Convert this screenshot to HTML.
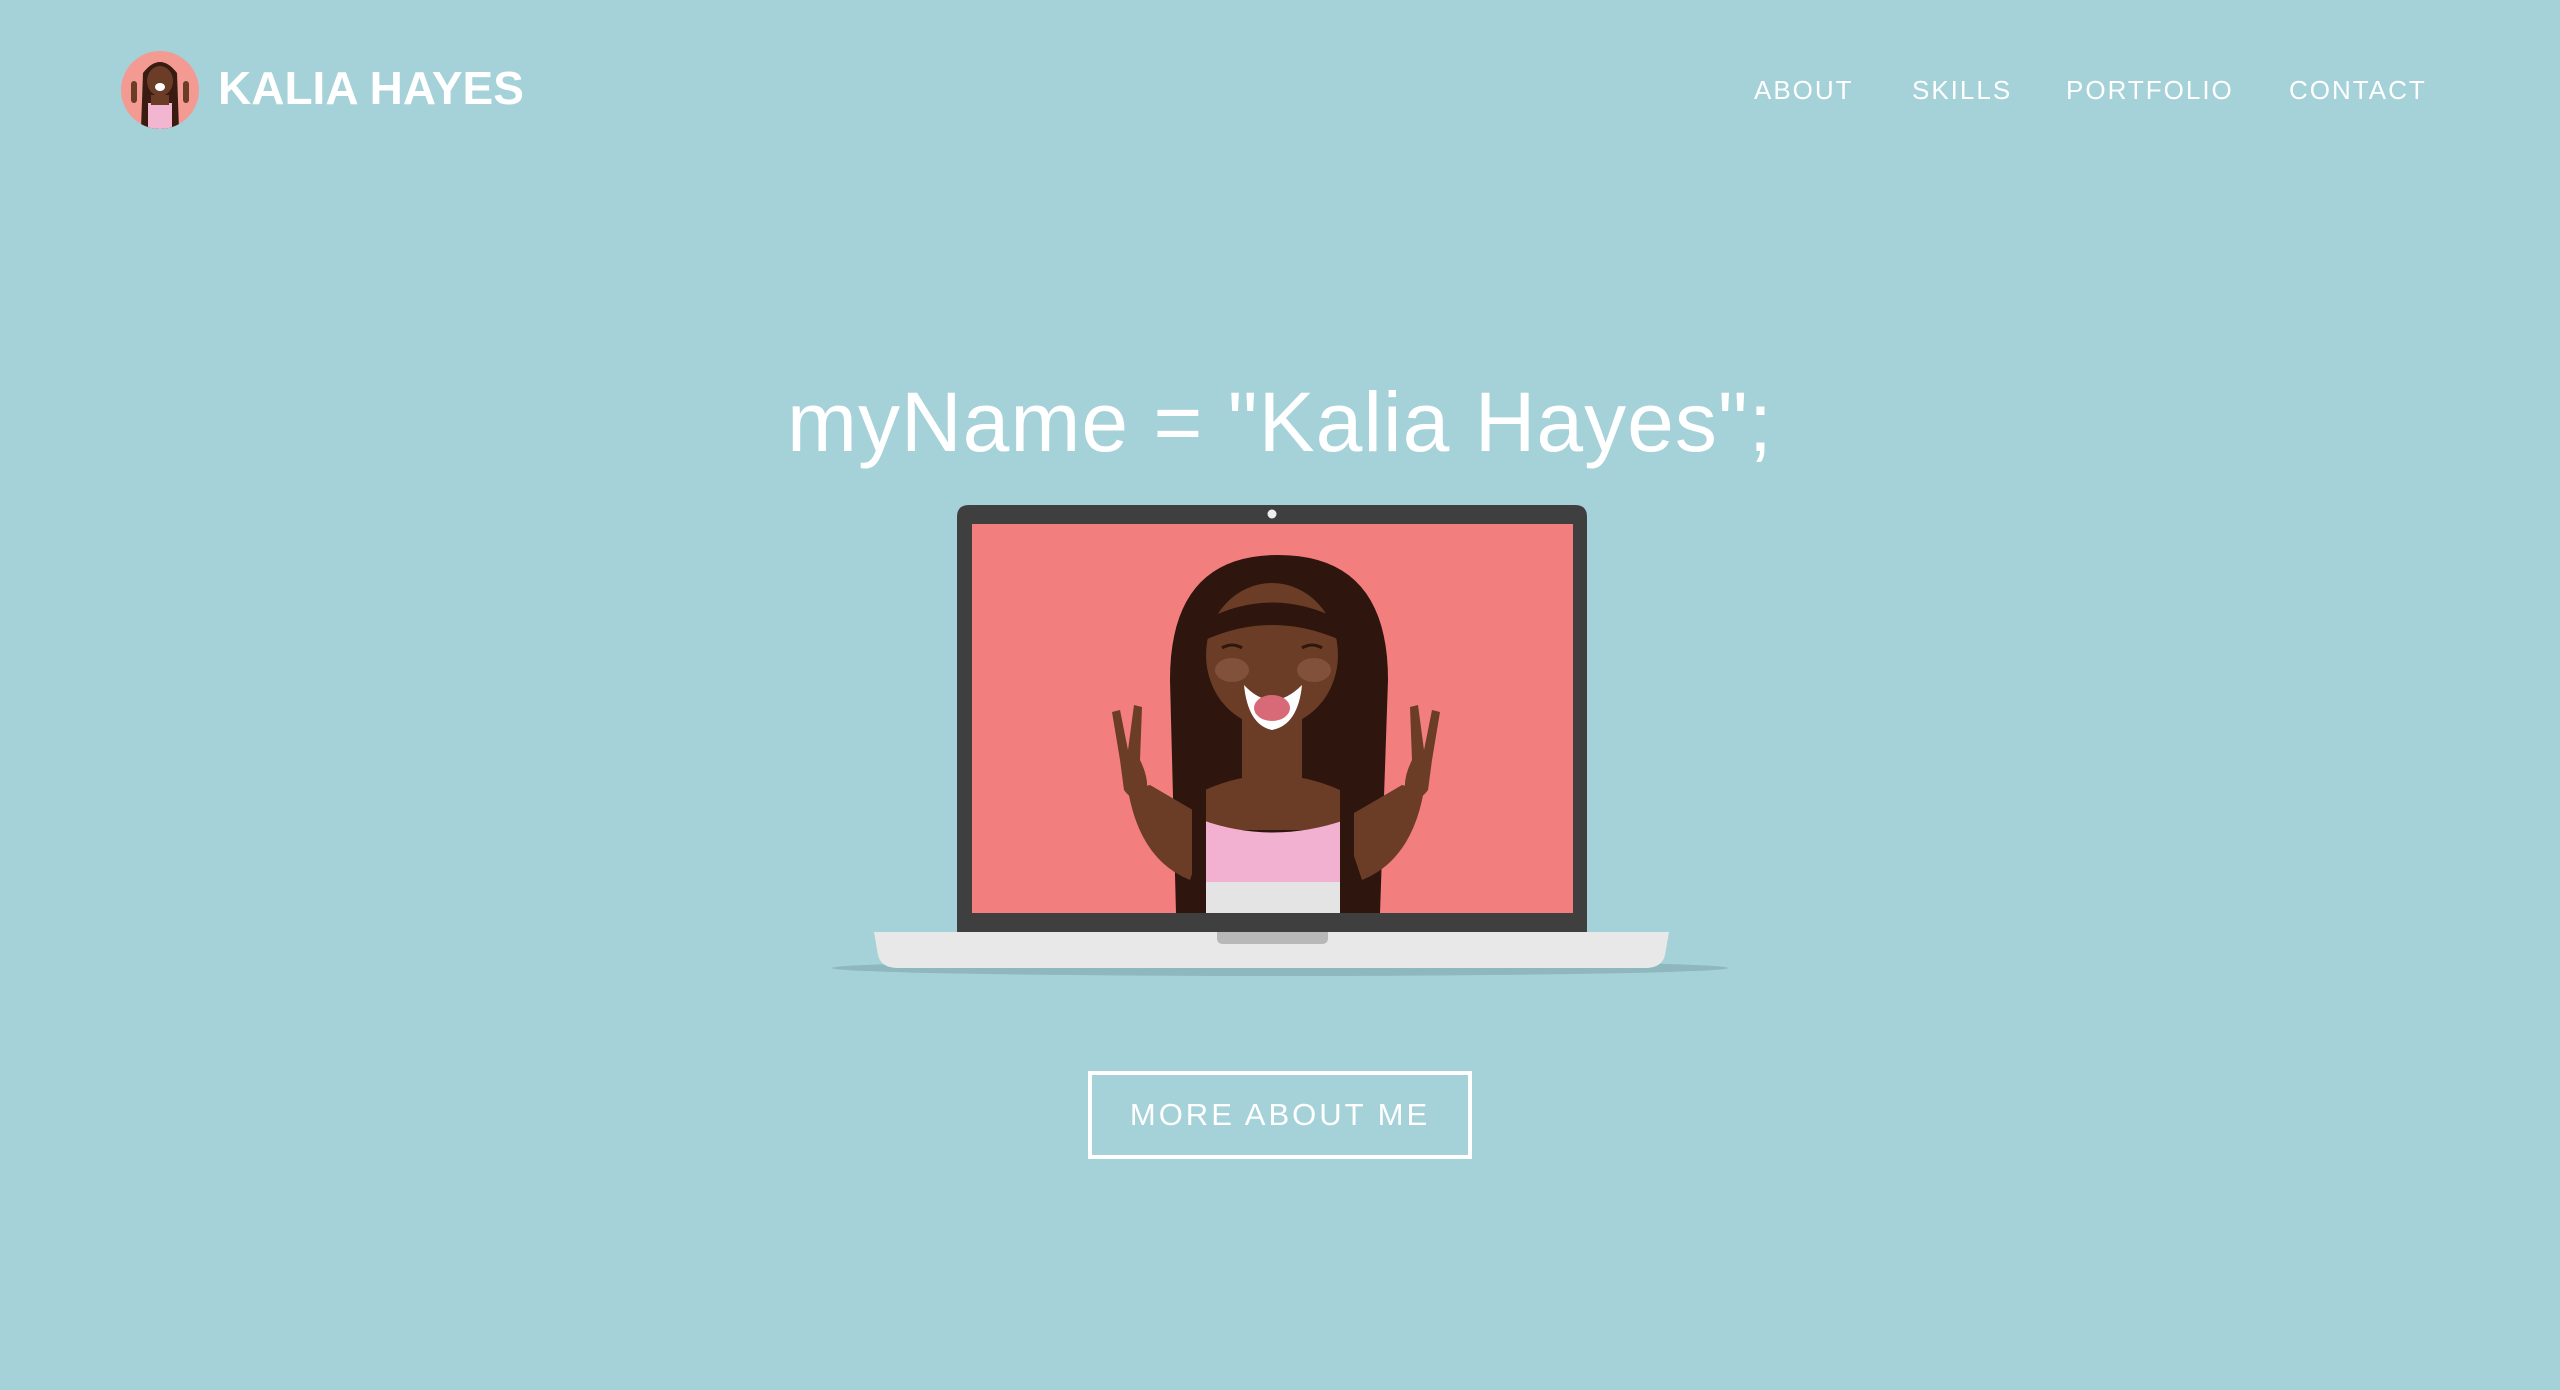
<!DOCTYPE html>
<html><head><meta charset="utf-8"><style>
html,body{margin:0;padding:0;width:2560px;height:1390px;overflow:hidden;background:#a5d1d8;font-family:"Liberation Sans",sans-serif;color:#fff}
.a{position:absolute;white-space:nowrap}
.nav{top:72px;font-size:26px;letter-spacing:2px;line-height:36px}
</style></head><body>
<svg class="a" style="left:121px;top:51px" width="78" height="78" viewBox="0 0 78 78">
<defs><clipPath id="c"><circle cx="39" cy="39" r="39"/></clipPath></defs>
<circle cx="39" cy="39" r="39" fill="#f39a93"/>
<g clip-path="url(#c)">
<path d="M22 22 Q39 0 56 22 L58 78 L20 78 Z" fill="#3a1b12"/>
<ellipse cx="39" cy="30" rx="13" ry="15" fill="#6b3d26"/>
<rect x="27" y="52" width="24" height="26" fill="#f2b6d0"/>
<rect x="30" y="44" width="18" height="10" fill="#6b3d26"/>
<ellipse cx="39" cy="36" rx="5" ry="4" fill="#fff"/>
<rect x="10" y="30" width="6" height="22" rx="3" fill="#6b3d26"/>
<rect x="62" y="30" width="6" height="22" rx="3" fill="#6b3d26"/>
</g></svg>
<div class="a" style="left:218px;top:62px;font-size:46px;font-weight:bold;line-height:52px">KALIA HAYES</div>
<div class="a nav" style="left:1754px">ABOUT</div>
<div class="a nav" style="left:1912px">SKILLS</div>
<div class="a nav" style="left:2066px">PORTFOLIO</div>
<div class="a nav" style="left:2289px">CONTACT</div>
<div class="a" style="left:0;width:2560px;text-align:center;top:372px;font-size:84px;line-height:100px;letter-spacing:1px">myName = "Kalia Hayes";</div>
<svg class="a" style="left:0;top:0" width="2560" height="1390" viewBox="0 0 2560 1390">
<ellipse cx="1280" cy="968" rx="448" ry="8" fill="#8fb8be"/>
<path d="M874 932 H1669 L1665 955 Q1662 968 1645 968 H898 Q881 968 878 955 Z" fill="#e8e8e8"/>
<path d="M1217 932 H1328 V938 Q1328 944 1322 944 H1223 Q1217 944 1217 938 Z" fill="#b8b8b8"/>
<path d="M957 932 V517 Q957 505 969 505 H1575 Q1587 505 1587 517 V932 Z" fill="#3f3f3f"/>
<circle cx="1272" cy="514" r="4.5" fill="#eee"/>
<rect x="972" y="524" width="601" height="389" fill="#f27e7e"/>
<defs><clipPath id="s"><rect x="972" y="524" width="601" height="389"/></clipPath></defs>
<g clip-path="url(#s)">
<path d="M1170 680 Q1170 555 1278 555 Q1388 555 1388 680 L1380 913 L1176 913 Z" fill="#2e150e"/>
<path d="M1120 760 L1112 712 L1120 710 L1128 750 L1134 705 L1142 707 L1140 760 Q1150 780 1146 795 Q1135 805 1124 790 Z" fill="#6b3d26"/>
<path d="M1432 760 L1440 712 L1432 710 L1424 750 L1418 705 L1410 707 L1412 760 Q1402 780 1406 795 Q1417 805 1428 790 Z" fill="#6b3d26"/>
<path d="M1128 790 Q1140 860 1190 880 L1210 820 L1150 785 Z" fill="#6b3d26"/>
<path d="M1424 790 Q1412 860 1362 880 L1342 820 L1402 785 Z" fill="#6b3d26"/>
<ellipse cx="1272" cy="655" rx="66" ry="72" fill="#6b3d26"/>
<rect x="1242" y="700" width="60" height="80" fill="#6b3d26"/>
<path d="M1205 790 Q1272 760 1340 790 L1345 830 L1200 830 Z" fill="#6b3d26"/>
<path d="M1202 820 Q1272 845 1345 820 L1342 885 L1205 885 Z" fill="#f2b1d0"/>
<rect x="1205" y="882" width="138" height="31" fill="#e4e4e4"/>
<path d="M1205 620 Q1272 585 1340 620 L1340 640 Q1272 610 1205 640 Z" fill="#2e150e"/>
<rect x="1192" y="620" width="14" height="293" fill="#2e150e"/>
<rect x="1340" y="620" width="14" height="293" fill="#2e150e"/>
<path d="M1244 685 Q1272 715 1302 685 Q1298 725 1272 730 Q1248 725 1244 685 Z" fill="#fff"/>
<ellipse cx="1272" cy="708" rx="18" ry="13" fill="#d86a77"/>
<ellipse cx="1232" cy="670" rx="17" ry="12" fill="#8a5a44" opacity=".7"/>
<ellipse cx="1314" cy="670" rx="17" ry="12" fill="#8a5a44" opacity=".7"/>
<path d="M1222 648 Q1232 642 1242 648 M1302 648 Q1312 642 1322 648" stroke="#2e150e" stroke-width="3" fill="none"/>
</g>
</svg>
<div class="a" style="left:1088px;top:1071px;width:376px;height:80px;border:4px solid #fff"></div>
<div class="a" style="left:1088px;top:1093px;width:384px;text-align:center;font-size:31px;letter-spacing:3px;line-height:44px">MORE ABOUT ME</div>
</body></html>
